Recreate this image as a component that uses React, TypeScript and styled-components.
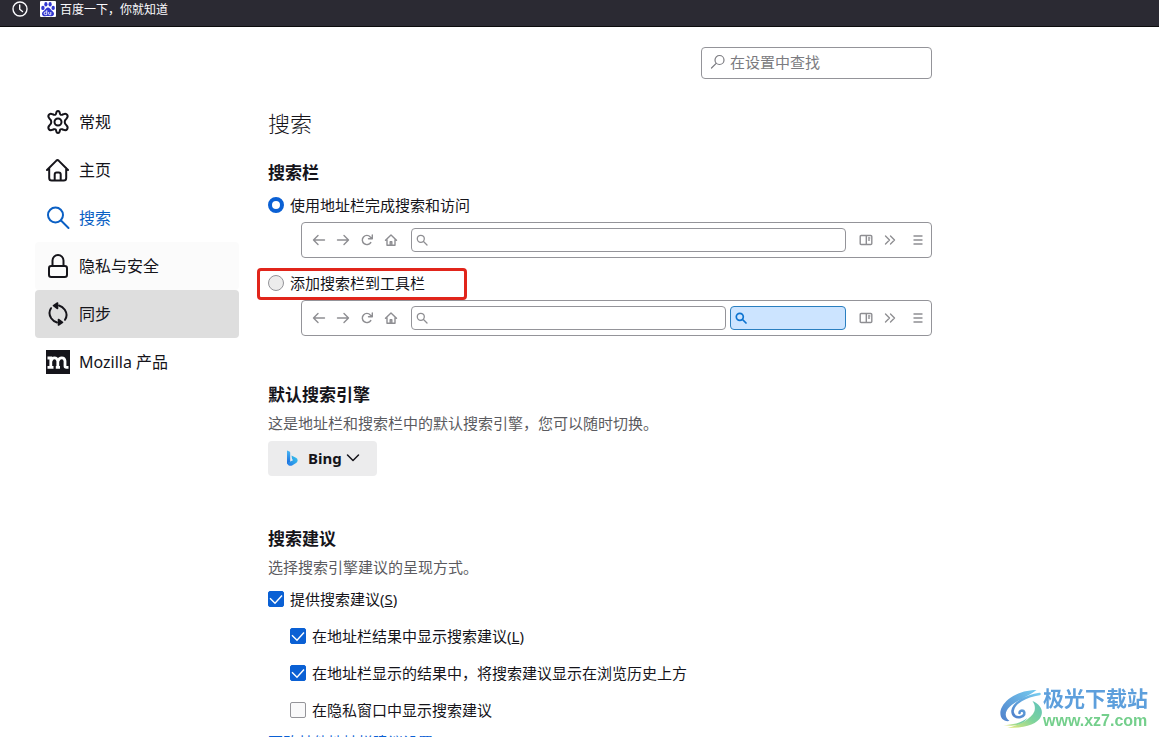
import React from "react";
import styled, { createGlobalStyle, css } from "styled-components";

const GlobalStyle = createGlobalStyle`
  * { box-sizing: border-box; }
  body {
    margin: 0;
    background: #fff;
    color: #15141a;
    font: 15px/22px "Noto Sans", "Noto Sans CJK SC", sans-serif;
  }
  h1, h2, p { margin: 0; }
  input { margin: 0; }
`;

const Window = styled.div`
  display: flex;
  flex-direction: column;
  height: 100vh;
  overflow: hidden;
`;

const BookmarksBar = styled.header`
  flex: none;
  display: flex;
  align-items: flex-start;
  gap: 12px;
  height: 27px;
  padding: 1px 12px 0;
  background: #2b2a33;
  border-bottom: 1px solid #0c0c0d;
  color: #fbfbfe;
`;

const BookmarkLink = styled.a`
  display: flex;
  align-items: center;
  gap: 4px;
  color: inherit;
  font-size: 12px;
  line-height: 18px;
  text-decoration: none;
  svg { align-self: flex-start; }
`;

const Preferences = styled.div`
  flex: 1;
  min-height: 0;
  display: flex;
  gap: 29px;
  padding: 0 35px;
  overflow: auto;
  scrollbar-width: none;
`;

const Sidebar = styled.nav`
  flex: none;
  width: 204px;
  padding-top: 71px;
`;

const Category = styled.a<{ $state?: "selected" | "hover" | "pressed" }>`
  display: flex;
  align-items: center;
  gap: 9px;
  height: 48px;
  padding: 0 11px;
  border-radius: 4px;
  color: #15141a;
  font-size: 16px;
  text-decoration: none;
  ${({ $state }) => $state === "selected" && css`color: #0a5fc4;`}
  ${({ $state }) => $state === "hover" && css`background: #fbfbfb;`}
  ${({ $state }) => $state === "pressed" && css`background: #dedede;`}
  svg { flex: none; }
`;

const Content = styled.main`
  flex: 1;
  min-width: 0;
  max-width: 664px;
  padding-top: 20px;
`;

const SearchField = styled.label`
  display: flex;
  align-items: center;
  gap: 4px;
  width: 231px;
  height: 32px;
  margin-left: auto;
  padding: 0 8px 2px;
  border: 1px solid #949499;
  border-radius: 4px;
  color: #7b7b80;
  svg { flex: none; }
`;

const SearchInput = styled.input`
  flex: 1;
  min-width: 0;
  padding: 0;
  border: 0;
  outline: 0;
  background: none;
  font: inherit;
  color: #15141a;
  &::placeholder { color: #7b7b80; opacity: 1; }
`;

const Title = styled.h1`
  margin-top: 27px;
  font-size: 22px;
  font-weight: 300;
  line-height: 34px;
`;

const Section = styled.section<{ $gap: number }>`
  margin-top: ${({ $gap }) => $gap}px;
`;

const SectionTitle = styled.h2`
  font-size: 17px;
  font-weight: 700;
  line-height: 24px;
`;

const Description = styled.p`
  margin-top: 5px;
  color: #5b5b60;
`;

const BarChoices = styled.div`
  margin-top: 9px;
`;

const Option = styled.label<{ $indent?: boolean }>`
  display: flex;
  align-items: center;
  gap: 6px;
  min-height: 22px;
  margin-left: ${({ $indent }) => ($indent ? 22 : 0)}px;
`;

const Radio = styled.input.attrs({ type: "radio" })`
  appearance: none;
  flex: none;
  width: 16px;
  height: 16px;
  border: 1px solid #949499;
  border-radius: 50%;
  background: #ececec;
  &:checked {
    border: 4px solid #0a60d4;
    background: #fff;
  }
`;

const Checkbox = styled.input.attrs({ type: "checkbox" })`
  appearance: none;
  width: 16px;
  height: 16px;
  border: 1px solid #949499;
  border-radius: 2px;
  background: #f9f9fa;
  &:checked {
    border-color: #0a60d4;
    background: #0a60d4;
  }
  & + svg { visibility: hidden; }
  &:checked + svg { visibility: visible; }
`;

const CheckHolder = styled.span`
  display: grid;
  flex: none;
  > * { grid-area: 1 / 1; }
  svg { pointer-events: none; }
`;

const ToolbarPreview = styled.div`
  display: flex;
  align-items: center;
  height: 36px;
  margin-left: 33px;
  padding: 0 5px 0 9px;
  border: 1px solid #949499;
  border-radius: 4px;
  color: #8e8e92;
  ${Option} + & { margin-top: 6px; }
`;

const Highlight = styled.div`
  width: 210px;
  margin: 10px 0 0 -11px;
  padding: 1px 8px 3px;
  border: 3px solid #e1251b;
  border-radius: 4px;
`;

const NavIcons = styled.div`
  display: flex;
  gap: 8px;
  margin-right: 12px;
`;

const PreviewField = styled.div<{ $active?: boolean }>`
  display: flex;
  align-items: center;
  flex: ${({ $active }) => ($active ? "0 0 116px" : "1")};
  height: 24px;
  padding: 0 4px;
  border: 1px solid ${({ $active }) => ($active ? "#2a7fc0" : "#949499")};
  border-radius: 4px;
  background: ${({ $active }) => ($active ? "#cce4ff" : "#fff")};
  color: ${({ $active }) => ($active ? "#0d74d1" : "#8e8e92")};
  & + & { margin-left: 4px; }
`;

const EndIcons = styled.div`
  display: flex;
  gap: 8px;
  margin-left: 12px;
  svg:last-child { margin-left: 4px; }
`;

const EngineButton = styled.button`
  display: flex;
  align-items: center;
  gap: 8px;
  height: 35px;
  margin-top: 7px;
  padding: 0 16px 2px;
  border: 0;
  border-radius: 4px;
  background: #ececed;
  color: #15141a;
  font: inherit;
  font-weight: 700;
`;

const EngineName = styled.span`
  display: flex;
  align-items: center;
  gap: 3px;
`;

const OptionList = styled.div`
  display: grid;
  gap: 15px;
  margin-top: 10px;
`;

const MoreLink = styled.a`
  display: inline-block;
  margin-top: 10px;
  color: #0a60d4;
`;

const Watermark = styled.div`
  position: fixed;
  right: 11px;
  bottom: 7px;
  display: flex;
  align-items: flex-end;
`;

const WatermarkText = styled.div`
  display: grid;
  color: #5d9fdc;
  font: 700 21px/30px "Noto Sans CJK SC", sans-serif;
  span:last-child {
    color: #74cf8c;
    font: 700 16px/18px "Liberation Sans", sans-serif;
  }
`;

type IconProps = { size?: number; children: React.ReactNode; weight?: number };

const Icon = ({ size = 24, weight = 2, children }: IconProps) => (
  <svg width={size} height={size} viewBox={`0 0 ${size} ${size}`} fill="none" stroke="currentColor"
    strokeWidth={weight} strokeLinecap="round" strokeLinejoin="round" aria-hidden="true">
    {children}
  </svg>
);

const ClockIcon = () => (
  <Icon size={16} weight={1.4}>
    <circle cx="8" cy="8" r="7" />
    <path d="M7.7 4v4.2l2.8 2.3" />
  </Icon>
);

const BaiduIcon = () => (
  <svg width="16" height="16" viewBox="0 0 16 16" aria-hidden="true">
    <rect width="16" height="16" rx="1" fill="#fff" />
    <g fill="#3136cf">
      <ellipse cx="2.9" cy="6.9" rx="1.7" ry="2.2" />
      <ellipse cx="5.9" cy="3.2" rx="1.6" ry="2.2" />
      <ellipse cx="10.1" cy="3.2" rx="1.6" ry="2.2" />
      <ellipse cx="13.2" cy="6.9" rx="1.7" ry="2.1" />
      <path d="M8 6.6c1.7 0 2.3 1.5 3.4 2.6 1.3 1.2 2.8 2 2.6 3.8-.2 1.9-1.8 2.4-3.3 2.2-1.8-.3-3.5-.3-5.3 0C3.8 15.5 2.2 14.8 2 13c-.2-1.8 1.4-2.6 2.6-3.8C5.7 8.1 6.3 6.6 8 6.6z" />
    </g>
    <path d="M6.8 9.2v4.4H5.4a1.2 1.2 0 0 1 0-2.6h1.4M8.7 11v1.9q0 .8.8.8h1.3V11" fill="none" stroke="#fff" strokeWidth=".9" />
  </svg>
);

const GearIcon = () => (
  <Icon>
    <circle cx="12" cy="12" r="3.5" />
    <path d="M10.2 3.2Q10.5 1 12 1t1.8 2.2q.3 2.2 2.4 1.5l1-.4q2.8-1.2 4 .6t-.8 3.8q-1.7 1.4-1.7 3.3t1.7 3.3q2 1.9.8 3.8t-4 .6l-1-.4q-2.1-.7-2.4 1.5Q13.5 23 12 23t-1.8-2.2q-.3-2.2-2.4-1.5l-1 .4q-2.8 1.2-4-.6t.8-3.8Q5.3 13.9 5.3 12T3.6 8.7q-2-1.9-.8-3.8t4-.6l1 .4q2.1.7 2.4-1.5z" />
  </Icon>
);

const HomeIcon = () => (
  <Icon>
    <path d="M1 12 10.4 2.6q1.1-1 2.2 0L22 12M3.2 10v10q0 2.5 2.5 2.5h12q2.5 0 2.5-2.5V10M8.700 22v-5.600q0-2 2-2h2q2 0 2 2V22" />
  </Icon>
);

const SearchIcon = () => (
  <Icon>
    <circle cx="9.5" cy="9" r="7.5" />
    <path d="m15 14.5 7.5 7.5" />
  </Icon>
);

const LockIcon = () => (
  <Icon>
    <rect x="3" y="12" width="18" height="11" rx="2.2" />
    <path d="M6.5 12V6.5a5.5 5.5 0 0 1 11 0V12" />
  </Icon>
);

const SyncIcon = () => (
  <Icon>
    <path d="M5 6.2Q1.8 11 5.2 16.2 7.5 19.5 11 20.500M19 17.800q3.200-4.800-.2-10Q16.500 4.500 13 3.500" />
    <path d="M11.5 1v5.500L7.500 3.700zM12.500 23v-5.500l4 2.800z" fill="currentColor" strokeWidth="1.6" />
  </Icon>
);

const MozillaIcon = () => (
  <svg width="24" height="24" viewBox="0 0 24 24" aria-hidden="true">
    <path fill="#15141a" d="M0 0h24v24H0z" />
    <path d="M1.5 8h3.300v9M1.500 17.300h6M5 11q1-3.200 3.500-3.200T11.800 11v6.300M9.800 17.300h4.200M12 11q1-3.200 3.800-3.200T19 11v5q0 1.300 1.300 1.300h2.200" fill="none" stroke="#fff" strokeWidth="2.800" />
  </svg>
);

const SmallSearchIcon = ({ weight = 1.3 }: { weight?: number }) => (
  <Icon size={12} weight={weight}>
    <circle cx="4.8" cy="4.8" r="3.5" />
    <path d="m7.5 7.5 3.5 3.5" />
  </Icon>
);

const FieldSearchIcon = () => (
  <Icon size={16} weight={1.2}>
    <circle cx="9.5" cy="6" r="4.5" />
    <path d="m6.2 9.3-4.7 4.7" />
  </Icon>
);

const previewIcons = {
  back: "M13.5 8H2.5M7 3.5 2.5 8 7 12.5",
  forward: "M2.5 8h11M9 3.5 13.5 8 9 12.5",
  reload: "M11.8 10.5a4.6 4.6 0 1 1-.5-5.6l1.700 1.600M13.300 3v3.800H9.500",
  home: "M2.5 8.3 8 3l5.500 5.300M4 7.500v5.800h8V7.500M7.200 13v-3.200h1.600V13",
  reader: "M3.2 3.5h9.600q1 0 1 1v7q0 1-1 1H3.200q-1 0-1-1v-7q0-1 1-1zM8.300 3.500v9M10.500 6h1.300M10.500 8h1",
  more: "m3.500 4 4 4-4 4M8.500 4l4 4-4 4",
  menu: "M4 4h8M4 8h8M4 12h8",
};

const PreviewIcon = ({ name }: { name: keyof typeof previewIcons }) => (
  <Icon size={16} weight={1.4}><path d={previewIcons[name]} /></Icon>
);

const BingIcon = () => (
  <svg width="16" height="16" viewBox="0 0 16 16" aria-hidden="true">
    <defs>
      <linearGradient id="bingStem" x1="0" y1="0" x2="0" y2="1">
        <stop stopColor="#49b8f4" /><stop offset="1" stopColor="#1668dc" />
      </linearGradient>
      <linearGradient id="bingBowl" x1="1" y1="0" x2="0" y2="1">
        <stop stopColor="#39c9ec" /><stop offset="1" stopColor="#2376e7" />
      </linearGradient>
    </defs>
    <path fill="url(#bingStem)" d="M3 .5 5.500 1.600q.7.400.7 1.200V12L3 14z" />
    <path fill="url(#bingBowl)" d="M7.5 5.500 12 7.700q1.800 1 1.600 3-.2 1.500-1.500 2.300l-4 2.400q-1.700.8-3.300 0Q3.200 14.500 3 13l6-2.800-1-1.400z" />
  </svg>
);

const AuroraIcon = () => (
  <svg width="43" height="42" viewBox="0 0 42 42" aria-hidden="true">
    <defs>
      <linearGradient id="auroraBlue" x1="0" y1="1" x2="1" y2="0">
        <stop stopColor="#4f80cb" /><stop offset="1" stopColor="#76cbef" />
      </linearGradient>
      <linearGradient id="auroraGreen" x1="0" y1="1" x2="1" y2="0">
        <stop stopColor="#e8e97a" /><stop offset=".5" stopColor="#7dd39b" /><stop offset="1" stopColor="#5fc3bc" />
      </linearGradient>
    </defs>
    <path fill="url(#auroraBlue)" d="M36 2C19 2 3 11 0 23c-1 7 3 11 9 10-5-4-5-9 0-14C15 13 27 9 36 2z" />
    <path fill="none" stroke="url(#auroraBlue)" strokeWidth="2.6" strokeLinecap="round" d="M39 6C25 8 13 15 12 23c0 5 4 7 8 6 4-1 5-4 3-6-2-1-4 0-4 2" />
    <path fill="url(#auroraGreen)" d="M32 13c9 4 12 11 7 18-5 6-16 9-32 9 12-3 24-9 27-17 1-4 0-7-2-10z" />
    <path fill="url(#auroraGreen)" d="M3 37c9 0 17-2 24-7-5 7-13 9-24 7z" />
  </svg>
);

const Check = ({ checked }: { checked?: boolean }) => (
  <CheckHolder>
    <Checkbox defaultChecked={checked} />
    <svg width="16" height="16" viewBox="0 0 16 16" fill="none" stroke="#fff" strokeWidth="1.4" aria-hidden="true">
      <path d="m2 7.2 5 5L14 4.5" />
    </svg>
  </CheckHolder>
);

const Preview = ({ separate }: { separate?: boolean }) => (
  <ToolbarPreview>
    <NavIcons>
      <PreviewIcon name="back" />
      <PreviewIcon name="forward" />
      <PreviewIcon name="reload" />
      <PreviewIcon name="home" />
    </NavIcons>
    <PreviewField><SmallSearchIcon /></PreviewField>
    {separate && <PreviewField $active><SmallSearchIcon weight={1.7} /></PreviewField>}
    <EndIcons>
      <PreviewIcon name="reader" />
      <PreviewIcon name="more" />
      <PreviewIcon name="menu" />
    </EndIcons>
  </ToolbarPreview>
);

export default function App() {
  return (
    <>
      <GlobalStyle />
      <Window>
        <BookmarksBar>
          <ClockIcon />
          <BookmarkLink href="#baidu"><BaiduIcon />百度一下，你就知道</BookmarkLink>
        </BookmarksBar>
        <Preferences>
          <Sidebar>
            <Category href="#general"><GearIcon />常规</Category>
            <Category href="#home"><HomeIcon />主页</Category>
            <Category href="#search" $state="selected"><SearchIcon />搜索</Category>
            <Category href="#privacy" $state="hover"><LockIcon />隐私与安全</Category>
            <Category href="#sync" $state="pressed"><SyncIcon />同步</Category>
            <Category href="#mozilla"><MozillaIcon />Mozilla 产品</Category>
          </Sidebar>
          <Content>
            <SearchField>
              <FieldSearchIcon />
              <SearchInput type="text" placeholder="在设置中查找" />
            </SearchField>
            <Title>搜索</Title>
            <Section $gap={21}>
              <SectionTitle>搜索栏</SectionTitle>
              <BarChoices>
                <Option><Radio name="bar" defaultChecked />使用地址栏完成搜索和访问</Option>
                <Preview />
                <Highlight>
                  <Option><Radio name="bar" />添加搜索栏到工具栏</Option>
                </Highlight>
                <Preview separate />
              </BarChoices>
            </Section>
            <Section $gap={47}>
              <SectionTitle>默认搜索引擎</SectionTitle>
              <Description>这是地址栏和搜索栏中的默认搜索引擎，您可以随时切换。</Description>
              <EngineButton type="button">
                <BingIcon />
                <EngineName>
                  Bing
                  <Icon size={16} weight={1.5}><path d="m2.5 5 5.5 5.5L13.5 5" /></Icon>
                </EngineName>
              </EngineButton>
            </Section>
            <Section $gap={51}>
              <SectionTitle>搜索建议</SectionTitle>
              <Description>选择搜索引擎建议的呈现方式。</Description>
              <OptionList>
                <Option><Check checked /><span>提供搜索建议(<u>S</u>)</span></Option>
                <Option $indent><Check checked /><span>在地址栏结果中显示搜索建议(<u>L</u>)</span></Option>
                <Option $indent><Check checked />在地址栏显示的结果中，将搜索建议显示在浏览历史上方</Option>
                <Option $indent><Check />在隐私窗口中显示搜索建议</Option>
              </OptionList>
              <MoreLink href="#suggestions">更改其他地址栏建议设置</MoreLink>
            </Section>
          </Content>
        </Preferences>
        <Watermark>
          <AuroraIcon />
          <WatermarkText><span>极光下载站</span><span>www.xz7.com</span></WatermarkText>
        </Watermark>
      </Window>
    </>
  );
}
